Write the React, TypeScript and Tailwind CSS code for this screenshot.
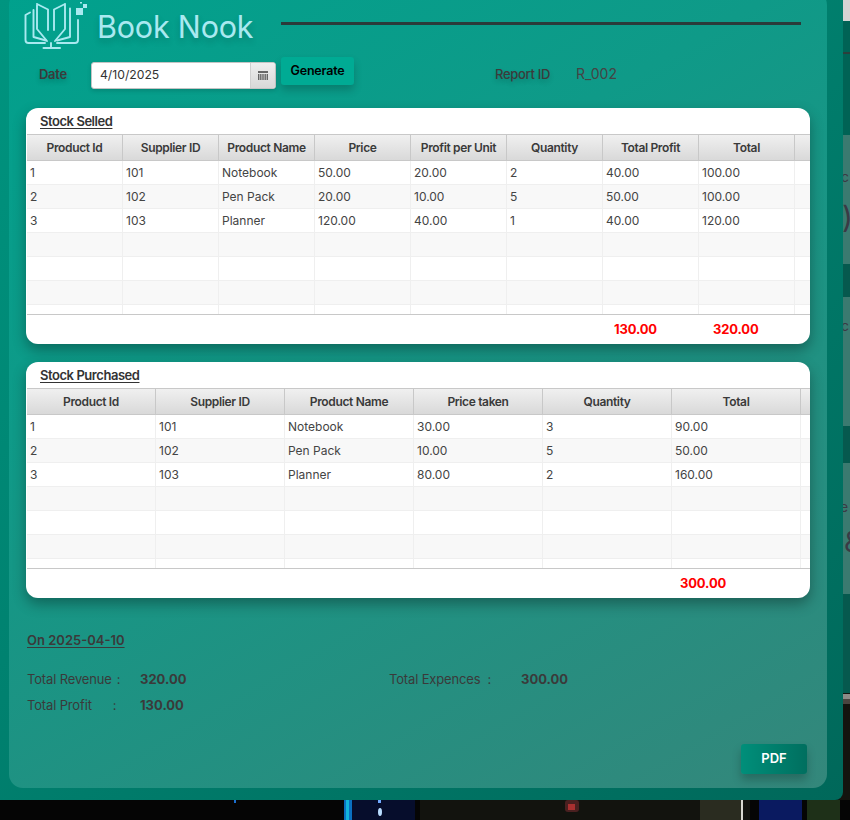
const SELLED_HEAD = ['Product Id', 'Supplier ID', 'Product Name', 'Price', 'Profit per Unit', 'Quantity', 'Total Profit', 'Total', ''];
const SELLED_ROWS = [
  ['1', '101', 'Notebook', '50.00', '20.00', '2', '40.00', '100.00', ''],
  ['2', '102', 'Pen Pack', '20.00', '10.00', '5', '50.00', '100.00', ''],
  ['3', '103', 'Planner', '120.00', '40.00', '1', '40.00', '120.00', ''],
];
const PURCHASED_HEAD = ['Product Id', 'Supplier ID', 'Product Name', 'Price taken', 'Quantity', 'Total', ''];
const PURCHASED_ROWS = [
  ['1', '101', 'Notebook', '30.00', '3', '90.00', ''],
  ['2', '102', 'Pen Pack', '10.00', '5', '50.00', ''],
  ['3', '103', 'Planner', '80.00', '2', '160.00', ''],
];

const FONT = "font-['Inter','Liberation_Sans',sans-serif]";

function Logo() {
  return (
    <svg width="65" height="48" viewBox="23 2 65 48" fill="none" stroke="#a9e9f0" strokeWidth="1.9" strokeLinejoin="round" strokeLinecap="round" className="shrink-0">
      <path d="M30 12.5 L25.5 15 V40 Q25.5 43 28.5 43 H45" />
      <path d="M33.5 10 V37 L46 40.5" />
      <path d="M37 4 L48 9.5 V30 M37 4 V29 L47 41" />
      <path d="M70 8.5 V37 L57 40.5" />
      <path d="M65 4 L54 9.5 V30 M65 4 V29 L55 41" />
      <path d="M78 20 V40 Q78 43 75 43 H57" />
      <path d="M51 43 V47" />
      <path d="M43.5 48 H60" strokeWidth="2" />
      <rect x="76" y="8" width="7" height="7" fill="#a9e9f0" stroke="none" />
      <rect x="83" y="4" width="4" height="4" fill="#a9e9f0" stroke="none" />
      <rect x="80" y="1.5" width="2" height="2" fill="#a9e9f0" stroke="none" />
    </svg>
  );
}

function CalendarIcon() {
  return (
    <svg width="10" height="9" viewBox="0 0 10 9" fill="#666">
      <rect x="0" y="0" width="10" height="2" />
      <rect x="0" y="3" width="1.4" height="6" />
      <rect x="2.1" y="3" width="1.4" height="6" />
      <rect x="4.3" y="3" width="1.4" height="6" />
      <rect x="6.5" y="3" width="1.4" height="6" />
      <rect x="8.6" y="3" width="1.4" height="6" />
    </svg>
  );
}

function DataTable({
  title,
  head,
  rows,
  gridClass,
  totals,
}: {
  title: string;
  head: string[];
  rows: string[][];
  gridClass: string;
  totals: React.ReactNode;
}) {
  const filled = [...rows, ...Array.from({ length: 4 }, () => head.map(() => ''))];
  return (
    <div className="w-[784px] h-[236px] bg-white rounded-xl shadow-[0_6px_14px_rgba(0,0,0,0.32)] flex flex-col overflow-hidden">
      <div className="h-[26px] pl-[14px] pt-[4px] shrink-0">
        <span className="text-[13px] leading-[18px] font-semibold tracking-[-0.45px] text-[#333] underline underline-offset-2 block w-fit">
          {title}
        </span>
      </div>
      <div className="ml-px h-[181px] overflow-hidden border-b border-[#c8c8c8] shrink-0">
        <div className={`grid ${gridClass} h-[27px] bg-gradient-to-b from-[#f0f0f0] to-[#d9d9d9] border-y border-[#c8c8c8]`}>
          {head.map((h, i) => (
            <div
              key={i}
              className="flex items-center justify-center border-r border-[#c8c8c8] text-xs font-semibold tracking-[-0.35px] text-[#3a3a3a] last:border-r-0"
            >
              {h}
            </div>
          ))}
        </div>
        {filled.map((row, r) => (
          <div key={r} className={`grid ${gridClass} h-6 border-b border-[#efefef] ${r % 2 === 1 ? 'bg-[#f8f8f8]' : 'bg-white'}`}>
            {row.map((c, i) => (
              <div key={i} className="flex items-center pl-[3px] border-r border-[#efefef] text-xs text-[#444] last:border-r-0">
                {c}
              </div>
            ))}
          </div>
        ))}
      </div>
      <div className="flex-1 text-[13px] font-bold tracking-[-0.15px] text-[#f00]">{totals}</div>
    </div>
  );
}

function BackdropStrip() {
  return (
    <svg width="7" height="800" viewBox="0 0 7 800" className="shrink-0 block">
      <rect width="7" height="800" fill="#06594e" />
      <rect width="7" height="21" fill="#d4d4d4" />
      <rect y="21" width="7" height="114" fill="#006355" />
      <rect y="52" width="7" height="2" fill="#2c3f3c" />
      <rect y="135" width="7" height="129" fill="#3b7a70" />
      <rect y="297" width="7" height="129" fill="#3b7a70" />
      <rect y="463" width="7" height="131" fill="#3b7a70" />
      <rect y="693" width="7" height="107" fill="#14140f" />
      <rect y="694" width="7" height="5" fill="#8d8a86" />
      <rect y="699" width="7" height="5" fill="#4a4540" />
      <text x="-2" y="182" fontSize="14" fill="#3a3a45" fontFamily="Inter">c</text>
      <text x="-1" y="228" fontSize="30" fill="#3a3a45" fontFamily="Inter">)</text>
      <text x="-2" y="331" fontSize="14" fill="#3a3a45" fontFamily="Inter">c</text>
      <text x="-3" y="512" fontSize="14" fill="#3a3a45" fontFamily="Inter">e</text>
      <text x="1" y="552" fontSize="28" fill="#3a3a45" fontFamily="Inter">&amp;</text>
    </svg>
  );
}

function BackdropBottom() {
  return (
    <svg width="850" height="20" viewBox="0 0 850 20" className="block shrink-0">
      <rect width="850" height="20" fill="#050505" />
      <rect x="420" width="330" height="20" fill="#12130e" />
      <rect x="352" width="63" height="20" fill="#060d2c" />
      <rect x="344" width="8" height="20" fill="#0a6fc0" />
      <rect x="346" width="3" height="20" fill="#12b4dc" />
      <rect x="234" y="0" width="2" height="3" fill="#1a6fd0" />
      <rect x="378" y="0" width="3" height="3" fill="#6fa8ff" />
      <ellipse cx="380" cy="12" rx="2" ry="4" fill="#b8dcff" />
      <rect x="565" y="0" width="14" height="12" rx="3" fill="#4a2020" />
      <rect x="568" y="4" width="7" height="6" fill="#a83030" />
      <rect x="700" width="42" height="20" fill="#2a2c20" />
      <rect x="741" width="2" height="20" fill="#d8d8d0" />
      <rect x="759" width="43" height="20" fill="#0a1a60" />
      <rect x="807" width="33" height="20" fill="#1e3018" />
    </svg>
  );
}

export default function App() {
  return (
    <div className={`w-[850px] h-[820px] overflow-hidden bg-[#050505] ${FONT}`}>
      <div className="flex h-[800px] bg-[#14140f]">
        <div className="w-[843px] h-[800px] shrink-0 overflow-hidden rounded-br-lg bg-gradient-to-br from-[#009580] to-[#00685a] pl-[9px]">
          <div className="w-[818px] h-[797px] -mt-[9px] rounded-[14px] bg-[linear-gradient(150deg,#00a18d_0%,#0f9a88_35%,#34877b_100%)] flex flex-col">
            <div className="h-[66px] pt-[11px] pl-[14px] flex items-start shrink-0">
              <Logo />
              <span className="ml-[9px] mt-[7px] w-[156px] whitespace-nowrap text-[30.5px] leading-[36px] tracking-[-0.2px] text-[#a9e9f0] [text-shadow:0_4px_6px_rgba(0,0,0,0.18)]">
                Book Nook
              </span>
              <div className="ml-[28px] mt-[20px] w-[520px] h-[3px] bg-[#2b3b3a]" />
            </div>

            <div className="h-[51px] pl-[30px] flex items-start shrink-0">
              <span className="mt-[8px] w-[52px] text-[13px] leading-[18px] font-semibold tracking-[-0.3px] text-[#3b3b3b] [text-shadow:0_3px_5px_rgba(0,0,0,0.2)]">
                Date
              </span>
              <div className="mt-[5px] w-[185px] h-[27px] flex rounded-[3px] border border-[#c4c4c4] bg-white shadow-[0_2px_4px_rgba(0,0,0,0.15)] overflow-hidden">
                <span className="flex-1 pl-[8px] text-[12.2px] leading-[23px] text-[#333]">4/10/2025</span>
                <span className="w-[25px] flex items-center justify-center border-l border-[#d0d0d0] bg-gradient-to-b from-[#efefef] to-[#d8d8d8]">
                  <CalendarIcon />
                </span>
              </div>
              <button className="ml-[5px] w-[73px] h-[28px] rounded-[3px] bg-[#00ab94] text-[12.5px] font-semibold tracking-[-0.2px] text-black shadow-[0_5px_8px_rgba(0,0,0,0.2)]">
                Generate
              </button>
              <span className="ml-[141px] mt-[8px] w-[81px] text-[13px] leading-[18px] font-medium tracking-[-0.3px] text-[#3b3b3b] [text-shadow:0_3px_5px_rgba(0,0,0,0.2)]">
                Report ID
              </span>
              <span className="mt-[8px] text-sm leading-[18px] text-[#444]">R_002</span>
            </div>

            <div className="pl-[17px] flex flex-col gap-[18px] shrink-0">
              <DataTable
                title="Stock Selled"
                head={SELLED_HEAD}
                rows={SELLED_ROWS}
                gridClass="grid-cols-[repeat(8,96px)_15px]"
                totals={
                  <div className="flex pl-[588px] pt-[6px] leading-[17px]">
                    <span className="w-[99px]">130.00</span>
                    <span>320.00</span>
                  </div>
                }
              />
              <DataTable
                title="Stock Purchased"
                head={PURCHASED_HEAD}
                rows={PURCHASED_ROWS}
                gridClass="grid-cols-[repeat(6,129px)_9px]"
                totals={<div className="pl-[654px] pt-[6px] leading-[17px]">300.00</div>}
              />
            </div>

            <div className="pl-[18px] pt-[33px] text-[#3a3a3a]">
              <div className="text-[13px] leading-[18px] font-semibold underline underline-offset-2">
                On 2025-04-10
              </div>
              <div className="mt-[21px] grid grid-cols-[113px_249px_132px_1fr] grid-rows-[18px_18px] gap-y-2 text-[13px] leading-[18px] tracking-[-0.15px] items-center">
                <span className="flex">
                  Total Revenue<span className="ml-[5px]">:</span>
                </span>
                <span className="font-bold tracking-normal">320.00</span>
                <span className="flex">
                  Total Expences<span className="ml-[7px]">:</span>
                </span>
                <span className="font-bold tracking-normal">300.00</span>
                <span className="flex">
                  Total Profit<span className="ml-[21px]">:</span>
                </span>
                <span className="font-bold tracking-normal">130.00</span>
              </div>
              <div className="flex justify-end pr-[20px] mt-[30px]">
                <button className="w-[66px] h-[30px] rounded-[3px] bg-gradient-to-r from-[#008f7a] to-[#006f5f] text-[13px] font-semibold text-white shadow-[0_6px_10px_rgba(0,0,0,0.22)]">
                  PDF
                </button>
              </div>
            </div>
          </div>
        </div>
        <BackdropStrip />
      </div>
      <BackdropBottom />
    </div>
  );
}
